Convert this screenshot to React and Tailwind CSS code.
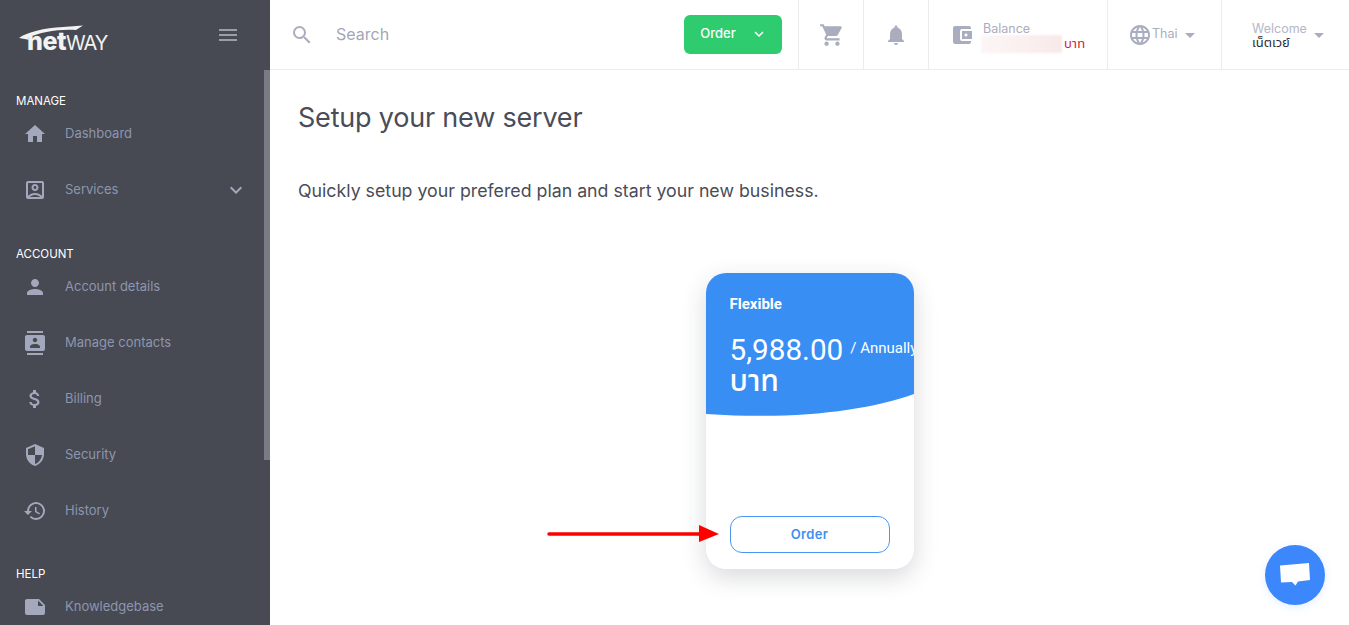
import {
  MdHome,
  MdOutlineAccountBox,
  MdPerson,
  MdContacts,
  MdAttachMoney,
  MdSecurity,
  MdHistory,
  MdNote,
  MdMenu,
  MdSearch,
  MdExpandMore,
  MdShoppingCart,
  MdNotifications,
  MdAccountBalanceWallet,
  MdLanguage,
  MdArrowDropDown,
} from "react-icons/md";

const thaiFont = "font-['Rubik','Inter','Noto_Sans','Noto_Sans_Thai',sans-serif]";

const menu = [
  {
    title: "MANAGE",
    gap: "mb-[31px]",
    items: [
      { label: "Dashboard", icon: MdHome },
      { label: "Services", icon: MdOutlineAccountBox, more: true },
    ],
  },
  {
    title: "ACCOUNT",
    gap: "mb-[30px]",
    items: [
      { label: "Account details", icon: MdPerson },
      { label: "Manage contacts", icon: MdContacts },
      { label: "Billing", icon: MdAttachMoney },
      { label: "Security", icon: MdSecurity },
      { label: "History", icon: MdHistory },
    ],
  },
  {
    title: "HELP",
    gap: "",
    items: [{ label: "Knowledgebase", icon: MdNote }],
  },
];

function Logo() {
  return (
    <div className="relative h-[30px] w-[92px] text-[#f2f2f2]">
      <svg viewBox="0 0 92 30" className="absolute left-0 top-0 h-[30px] w-[92px]">
        <path d="M1 18C9 12 26 8 45 7L65 5.5 58 10C40 9 22 12 10 18L12 20Z" fill="#f2f2f2" />
      </svg>
      <div className="absolute left-[9px] top-[10px] flex items-baseline leading-[22px] font-['Inter',sans-serif]">
        <span className="text-[25px] font-extrabold tracking-[-0.5px]">net</span>
        <span className="text-[20px] font-normal tracking-[-1px]">WAY</span>
      </div>
    </div>
  );
}

function Sidebar() {
  return (
    <aside className="relative flex h-full w-[270px] shrink-0 flex-col overflow-hidden bg-[#474953]">
      <div className="flex h-[70px] shrink-0 items-center justify-between pl-[18px] pr-[30px]">
        <Logo />
        <MdMenu className="text-[24px] text-[#9a9daa]" />
      </div>
      <nav className="flex flex-col pt-[25px]">
        {menu.map((section) => (
          <div key={section.title} className={section.gap}>
            <div className="h-[10px] pl-[16px] text-[11.5px] leading-[12px] text-white">{section.title}</div>
            {section.items.map((item) => {
              const Icon = item.icon;
              return (
                <div key={item.label} className="flex h-[56px] shrink-0 items-center pl-[23px] pr-[22px] pt-[1px]">
                  <Icon className="w-[24px] shrink-0 text-[24px] text-[#a3a8bc]" />
                  <span className="ml-[18px] flex-1 pb-[2px] text-[13px] leading-[20px] text-[#8e96ae]">{item.label}</span>
                  {item.more && <MdExpandMore className="text-[24px] text-[#a3a8bc]" />}
                </div>
              );
            })}
          </div>
        ))}
      </nav>
      {/* sidebar scroll thumb */}
      <div className="absolute right-0 top-[70px] h-[390px] w-[6px] bg-[#797b85]" />
    </aside>
  );
}

function Topbar() {
  return (
    <header className="flex h-[70px] shrink-0 items-stretch border-b border-[#ebecf0] bg-white">
      <div className="flex flex-1 items-center pl-[20px] pr-[16px]">
        <MdSearch className="text-[24px] text-[#a9adbd]" />
        <span className="ml-[22px] flex-1 pb-[2px] text-[16px] text-[#a3a7b5]">Search</span>
        <button className="flex h-[39px] w-[98px] items-center justify-center gap-[14px] rounded-[6px] bg-[#2ecb6f] pb-[1px] pl-[2px] text-[13px] font-medium text-white">
          Order
          <MdExpandMore className="text-[18px]" />
        </button>
      </div>
      <div className="flex w-[65px] items-center justify-center border-l border-[#ebecf0] pl-[1px]">
        <MdShoppingCart className="text-[26px] text-[#a9adbd]" />
      </div>
      <div className="flex w-[65px] items-center justify-center border-l border-[#ebecf0]">
        <MdNotifications className="text-[24px] text-[#a9adbd]" />
      </div>
      <div className="flex w-[179px] items-center border-l border-[#ebecf0] pl-[21px]">
        <MdAccountBalanceWallet className="text-[24px] text-[#a9adbd]" />
        <div className="ml-[7px] flex flex-col pt-[6px]">
          <span className="pl-[2px] text-[12.5px] leading-[13px] text-[#a9adbd]">Balance</span>
          <div className="flex items-center">
            <div className="h-[18px] w-[81px] bg-gradient-to-r from-[#fdf6f6] to-[#f9e9e9] blur-[1px]" />
            <span className={`ml-[2px] text-[13px] leading-[18px] text-[#d3163c] ${thaiFont}`}>บาท</span>
          </div>
        </div>
      </div>
      <div className="flex w-[114px] items-center border-l border-[#ebecf0] pl-[20px]">
        <MdLanguage className="text-[24px] text-[#a9adbd]" />
        <span className="text-[12.5px] text-[#a9adbd]">Thai</span>
        <MdArrowDropDown className="text-[24px] text-[#a9adbd]" />
      </div>
      <div className="flex w-[128px] items-center border-l border-[#ebecf0] pl-[30px]">
        <div className="flex flex-col pt-[2px]">
          <span className="text-[12.5px] leading-[14px] text-[#b3b7c6]">Welcome</span>
          <span className={`text-[13px] leading-[14px] text-[#2a2d38] ${thaiFont}`}>เน็ตเวย์</span>
        </div>
        <MdArrowDropDown className="text-[24px] text-[#a9adbd]" />
      </div>
    </header>
  );
}

function PlanCard() {
  return (
    <div className="relative mx-auto flex h-[296px] w-[208px] flex-col overflow-hidden rounded-[20px] bg-white shadow-[0_8px_24px_rgba(40,44,60,0.18)]">
      <div className="h-[121px] shrink-0 bg-[#388ef2] pl-[24px] pt-[22px] text-white">
        <div className="font-['Roboto',sans-serif] text-[15px] font-bold leading-[18px]">Flexible</div>
        <div className="mt-[20px] flex w-[240px] items-start font-['Roboto',sans-serif]">
          <span className="text-[29.7px] leading-[34px]">5,988.00</span>
          <span className="ml-[7px] mt-[5px] text-[15px] leading-[20px]">/ Annually</span>
        </div>
        <div className={`text-[30px] font-medium leading-[29px] ${thaiFont}`}>บาท</div>
      </div>
      <svg viewBox="0 0 208 24" preserveAspectRatio="none" className="block h-[24px] w-[208px] shrink-0">
        <path d="M0 0H208V0C160 17 90 26 0 20Z" fill="#388ef2" />
      </svg>
      <div className="mt-auto px-[24px] pb-[16px]">
        <button className="h-[37px] w-full rounded-[12px] border border-[#4a97f3] text-[13px] font-semibold tracking-[0.3px] text-[#3f8ff0]">
          Order
        </button>
      </div>
    </div>
  );
}

export default function App() {
  return (
    <div className="relative flex h-[625px] w-full overflow-hidden bg-white font-['Inter',sans-serif]">
      <Sidebar />
      <div className="flex min-w-0 flex-1 flex-col">
        <Topbar />
        <main className="flex-1 pt-[30px]">
          <h1 className="pl-[28px] text-[27px] leading-[36px] tracking-[-0.2px] text-[#4a4c58]">Setup your new server</h1>
          <p className="mt-[41px] pl-[28px] text-[17.75px] leading-[28px] text-[#4a4c58]">
            Quickly setup your prefered plan and start your new business.
          </p>
          <div className="mt-[68px]">
            <PlanCard />
          </div>
        </main>
      </div>

      {/* annotation arrow over the page */}
      <svg className="absolute left-[545px] top-[524px] h-[20px] w-[176px]" viewBox="0 0 176 20">
        <path d="M4 10H156" stroke="#ff0000" strokeWidth="3.5" strokeLinecap="round" />
        <path d="M154 1L174 10 154 18Z" fill="#ff0000" />
      </svg>

      {/* chat bubble */}
      <div className="absolute left-[1265px] top-[545px] flex h-[60px] w-[60px] items-center justify-center rounded-full bg-[#3c87fb] shadow-[0_2px_8px_rgba(60,135,251,0.15)]">
        <svg viewBox="0 0 30 26" className="h-[26px] w-[30px]">
          <path d="M0 3.5L29 1L30 18L18 19.5L15.5 23.5L12 20L1 20.5Z" fill="#fff" />
        </svg>
      </div>
    </div>
  );
}
